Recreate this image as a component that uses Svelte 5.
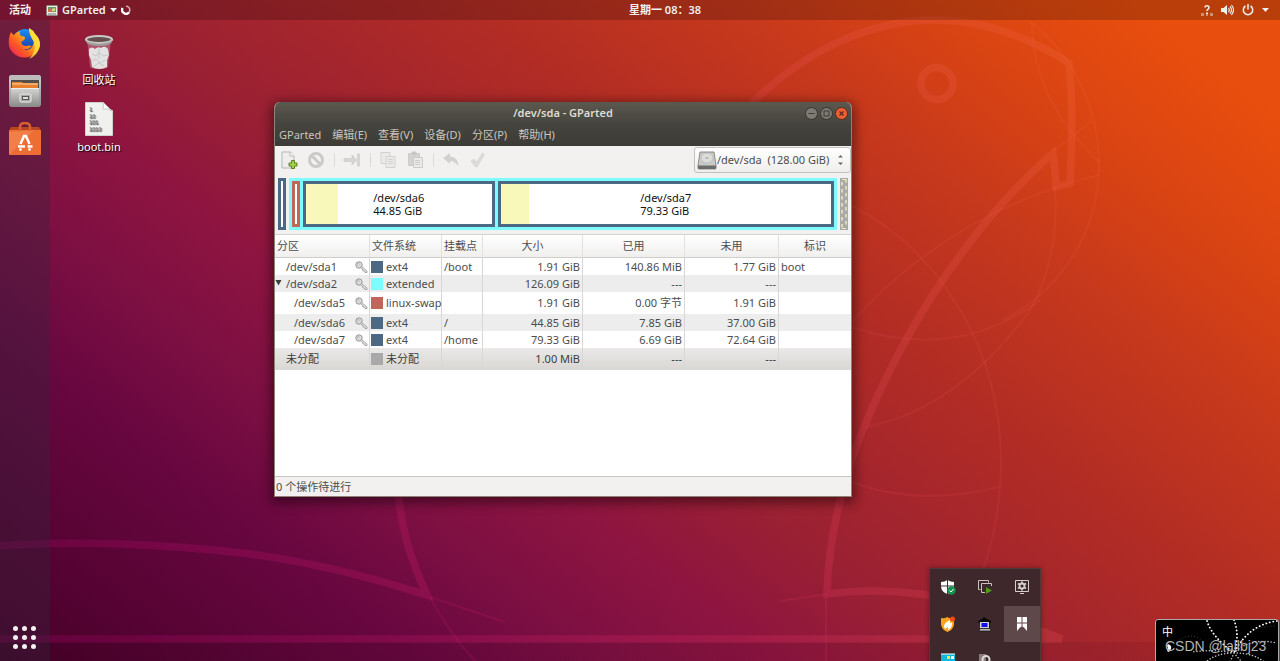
<script>
  const rows = [
    { name: '/dev/sda1', depth: 1, key: true, color: '#4b6983', fs: 'ext4', mount: '/boot', size: '1.91 GiB', used: '140.86 MiB', free: '1.77 GiB', flag: 'boot' },
    { name: '/dev/sda2', depth: 1, key: true, open: true, color: '#7dfcfe', fs: 'extended', mount: '', size: '126.09 GiB', used: '---', free: '---', flag: '' },
    { name: '/dev/sda5', depth: 2, key: true, tall: true, color: '#c1665a', fs: 'linux-swap', mount: '', size: '1.91 GiB', used: '0.00 字节', free: '1.91 GiB', flag: '' },
    { name: '/dev/sda6', depth: 2, key: true, color: '#4b6983', fs: 'ext4', mount: '/', size: '44.85 GiB', used: '7.85 GiB', free: '37.00 GiB', flag: '' },
    { name: '/dev/sda7', depth: 2, key: true, color: '#4b6983', fs: 'ext4', mount: '/home', size: '79.33 GiB', used: '6.69 GiB', free: '72.64 GiB', flag: '' },
    { name: '未分配', depth: 1, tall: true, selected: true, color: '#a9a9a9', fs: '未分配', mount: '', size: '1.00 MiB', used: '---', free: '---', flag: '' }
  ];
  const menus = ['GParted', '编辑(E)', '查看(V)', '设备(D)', '分区(P)', '帮助(H)'];
  const heads = ['分区', '文件系统', '挂载点', '大小', '已用', '未用', '标识'];
  const dots = [0, 1, 2, 3, 4, 5, 6, 7, 8];
</script>

<div class="screen">
  <svg class="wallpaper" viewBox="0 0 1280 661" preserveAspectRatio="xMidYMid slice" aria-hidden="true">
    <defs>
      <linearGradient id="line" gradientUnits="userSpaceOnUse" x1="0" y1="661" x2="1280" y2="0">
        <stop offset="0" stop-color="#c0007c" stop-opacity=".2" />
        <stop offset=".45" stop-color="#d42a5c" stop-opacity=".3" />
        <stop offset="1" stop-color="#ff8040" stop-opacity=".2" />
      </linearGradient>
      <linearGradient id="floor" x1="0" y1="0" x2="1" y2="0">
        <stop offset="0" stop-color="#000" stop-opacity=".08" />
        <stop offset="1" stop-color="#4a0020" stop-opacity=".1" />
      </linearGradient>
    </defs>
    <rect x="0" y="642" width="1280" height="19" fill="url(#floor)" />
    <g fill="none" stroke="url(#line)" stroke-width="7.500">
      <path d="M0 546C70 540 170 544 250 554C310 562 370 577 427 595C411 560 401 530 398 490C395 330 560 300 750 105C805 50 870 20 935 20C985 20 1030 38 1069 63C1073 100 1072 145 1070 183L1056 187C1055 175 1055 165 1053 153C960 235 895 345 855 450C838 500 828 545 827 594C880 587 930 593 975 605L1062 639H0" />
      <circle cx="937" cy="83.500" r="16" />
    </g>
    <g fill="none" stroke="url(#line)" stroke-width="2" opacity=".65">
      <path d="M1027 20C1070 50 1099 105 1099 165C1099 230 1062 290 1003 320" />
      <path d="M1032 22C1032 75 1055 120 1099 162M1092 121L1053 151M1099 175C1010 196 920 245 852 322" />
      <path d="M1055 187C1059 240 1045 290 1025 317C985 370 930 415 866 427" />
      <path d="M850 205C940 250 1001 350 1001 462C1001 500 995 535 983 570" />
      <path d="M852 327C920 350 985 342 1040 300M852 482C900 500 950 499 999 487" />
      <path d="M826 597V661M780 601L828 594M430 597L505 622M430 597Q448 632 475 661" />
    </g>
  </svg>

  <header class="topbar">
    <div class="left">
      <button>活动</button>
      <button class="app">
        <svg width="12" height="11" viewBox="0 0 12 11"><rect x=".5" y=".5" width="11" height="10" rx="1" fill="#ece9e2" stroke="#8a8580" /><rect x="2" y="2" width="8" height="5" fill="#5f9c6b" /><path d="M2 5l2-2 2 2v2H2z" fill="#d46d55" /><path d="M6 4l3-1v3H6z" fill="#e7d777" /><path d="M2 9h8" stroke="#777" /></svg>
        <span>GParted</span>
        <svg width="7" height="5" viewBox="0 0 7 5"><path d="M0 0h7L3.500 4z" fill="#eee" /></svg>
        <svg width="10" height="10" viewBox="0 0 10 10"><path d="M5 1.200A3.800 3.800 0 0 1 5 8.800" fill="none" stroke="#eee" stroke-width="1.600" opacity=".7" /><path d="M1.500 3A4 4 0 0 0 8 7.500" fill="none" stroke="#fff" stroke-width="2.400" /></svg>
      </button>
    </div>
    <button class="clock">星期一 08：38</button>
    <div class="right">
      <svg width="12" height="12" viewBox="0 0 12 12"><path d="M0 9h3v3H0zM9 9h3v3H9zM5 10h2v2H5z" fill="#eee" opacity=".45" /><path d="M4 3.500C4 1 8 1 8 3.500C8 5.200 6 5 6 7" fill="none" stroke="#eee" stroke-width="1.500" /><path d="M5 8.500h2v1.500H5z" fill="#eee" /></svg>
      <svg width="13" height="12" viewBox="0 0 13 12"><path d="M0 4h2.500L6 1v10L2.500 8H0z" fill="#eee" /><path d="M7.500 4q1.500 2 0 4M9 2.500q3 3.500 0 7M10.500 1q4 5 0 10" fill="none" stroke="#eee" stroke-width="1.200" /></svg>
      <svg width="12" height="12" viewBox="0 0 12 12"><path d="M3.500 2A4.700 4.700 0 1 0 8.500 2M6 0v5.500" fill="none" stroke="#eee" stroke-width="1.500" /></svg>
      <svg width="7" height="5" viewBox="0 0 7 5"><path d="M0 0h7L3.500 4z" fill="#eee" /></svg>
    </div>
  </header>

  <main class="workspace">
    <nav class="dock">
      <button aria-label="Firefox">
        <svg width="34" height="34" viewBox="0 0 34 34">
          <defs>
            <linearGradient id="fox" x1="1" y1="0" x2="0" y2="1"><stop offset="0" stop-color="#fff36a" /><stop offset=".35" stop-color="#ffb51b" /><stop offset=".65" stop-color="#ff5a23" /><stop offset="1" stop-color="#e8136a" /></linearGradient>
            <linearGradient id="globe" x1="0" y1="0" x2="0" y2="1"><stop offset="0" stop-color="#1b8ff2" /><stop offset="1" stop-color="#1b2e9c" /></linearGradient>
          </defs>
          <circle cx="17" cy="15" r="12" fill="url(#globe)" />
          <path d="M3 6q1 2 3 3q2-3 6-4q-1 3 1 5q4 0 4 2t-4 4q1 4 5 4q3-1 6 0q-5 5-10 3q6 3 10-2t-1-11q-2-4-2-8q4 2 6 6q5 4 5 11a16 16 0 0 1-31 1Q0 12 3 6z" fill="url(#fox)" />
          <path d="M21 2q4 2 6 6q5 5 5 12q-2 9-11 13q8-7 5-17q-5-7-5-14z" fill="#ffe23a" opacity=".85" />
        </svg>
      </button>
      <button aria-label="文件">
        <svg width="34" height="34" viewBox="0 0 34 34">
          <defs><linearGradient id="cab" x1="0" y1="0" x2="0" y2="1"><stop offset="0" stop-color="#d5d5d3" /><stop offset="1" stop-color="#8c8c8a" /></linearGradient></defs>
          <rect x="1" y="1" width="32" height="32" rx="3" fill="url(#cab)" /><path d="M1 4q0-3 3-3h26q3 0 3 3v2H1z" fill="#bcbcba" />
          <rect x="3" y="6" width="28" height="9" fill="#56504d" /><path d="M4 8h10l1 1h15v6H4z" fill="#e9802d" /><path d="M4 10h26" stroke="#ffd3a0" />
          <path d="M3 14h28v18H3z" fill="url(#cab)" /><path d="M3 14.500h28" stroke="#efefed" />
          <rect x="12" y="20" width="11" height="8" rx="1" fill="#aaa" stroke="#eee" /><rect x="14.500" y="22.500" width="6" height="3" fill="#ddd" stroke="#555" />
        </svg>
      </button>
      <button aria-label="Ubuntu 软件">
        <svg width="34" height="34" viewBox="0 0 34 34">
          <path d="M3 5h28l2 4H1z" fill="#b9481f" /><path d="M1 8h32v24q0 1-1 1H2q-1 0-1-1z" fill="#ee6d35" /><path d="M1 33V10l25-2z" fill="#f4a06e" opacity=".35" />
          <path d="M12 9V5q0-4 5-4t5 4v4" fill="none" stroke="#d8622f" stroke-width="2.500" />
          <path d="M12.500 22l3.500-8h2l3.500 8M10 24.500h7M19.500 24.500h5M12 28.500l1-2M22 28.500l-1-2" fill="none" stroke="#fff" stroke-width="2.400" />
        </svg>
      </button>
      <button class="apps" aria-label="显示应用程序">{#each dots as d (d)}<i></i>{/each}</button>
    </nav>

    <section class="desktop">
      <button>
        <svg width="30" height="36" viewBox="0 0 30 36">
          <path d="M3 5l3 28q1 2 9 2t9-2l3-28z" fill="#fff" fill-opacity=".25" />
          <path d="M5 15q3-3 6 0q3-3 6-1q4-3 7 1l1 6-2 5v7q-8 4-15 0l-1-7-2-5z" fill="#e2e2e2" />
          <path d="M8 20l4 2 3-4 4 4 5-1M8 27l4-2 4 4 5-3M10 32l5-3 5 3M15 15v10" fill="none" stroke="#c6c6c6" />
          <ellipse cx="15" cy="5.500" rx="13" ry="3.500" fill="#65504f" stroke="#c8c8c5" stroke-width="2.200" /><path d="M2 6q1 3 13 4q12-1 13-4v2q-2 4-13 4T2 8z" fill="#9c9c9a" />
        </svg>
        <span>回收站</span>
      </button>
      <button>
        <svg width="30" height="36" viewBox="0 0 30 36">
          <path d="M1.500 1.500h18q2 6 9 8v25h-27z" fill="#f0f0ef" stroke="#d0d0ce" /><path d="M19 1q1 3 0 7q5-1 9 2z" fill="#fff" stroke="#bbb" stroke-width=".8" />
          <g font-family="Liberation Sans, sans-serif" font-size="5.500" fill="#777"><text x="5" y="9.500">1</text><text x="5" y="16.500">10</text><text x="5" y="23">101</text><text x="5" y="30">1010</text></g>
        </svg>
        <span>boot.bin</span>
      </button>
    </section>

    <section class="window" aria-label="GParted">
      <div class="titlebar">
        <h1>/dev/sda - GParted</h1>
        <div class="controls">
          <button aria-label="最小化"><svg width="13" height="13" viewBox="0 0 13 13"><circle cx="6.500" cy="6.500" r="6" fill="#7d7b74" stroke="#35342f" /><path d="M3.500 6.500h6" stroke="#3c3b37" /></svg></button>
          <button aria-label="最大化"><svg width="13" height="13" viewBox="0 0 13 13"><circle cx="6.500" cy="6.500" r="6" fill="#7d7b74" stroke="#35342f" /><rect x="4" y="4" width="5" height="5" fill="none" stroke="#3c3b37" /></svg></button>
          <button aria-label="关闭"><svg width="13" height="13" viewBox="0 0 13 13"><circle cx="6.500" cy="6.500" r="6" fill="#ee5f33" stroke="#5b2c1c" /><path d="M4.500 4.500l4 4m0-4l-4 4" stroke="#5a2a1a" stroke-width="1.200" /></svg></button>
        </div>
      </div>
      <nav class="menubar">{#each menus as m (m)}<button>{m}</button>{/each}</nav>

      <div class="toolbar">
        <button aria-label="新建"><svg width="18" height="18" viewBox="0 0 18 18"><path d="M2 1h8.500l3.500 4v12H2z" fill="#eee" stroke="#b5b5b5" /><path d="M10 1v4h4" fill="#fff" stroke="#bbb" /><path d="M11.500 9.500h3v2.500h2.500v3h-2.500v2.500h-3V15H9v-3h2.500z" fill="#a6cf45" stroke="#4d7a10" stroke-width=".9" /></svg></button>
        <button aria-label="删除"><svg width="18" height="18" viewBox="0 0 18 18"><circle cx="9" cy="9" r="6.500" fill="none" stroke="#cbcac8" stroke-width="3" /><path d="M4.500 4.500l9 9" stroke="#cbcac8" stroke-width="3" /></svg></button>
        <hr />
        <button aria-label="调整大小/移动"><svg width="18" height="18" viewBox="0 0 18 18"><path d="M1 7.500h8V4l5 5-5 5v-3.500H1z" fill="#d6d5d3" stroke="#cac9c7" stroke-width=".6" /><path d="M14.500 3h2v12h-2z" fill="#d6d5d3" stroke="#cac9c7" stroke-width=".6" /></svg></button>
        <hr />
        <button aria-label="复制"><svg width="18" height="18" viewBox="0 0 18 18" fill="#ebeae8" stroke="#d3d2d0"><path d="M2 1.500h9v11H2z" /><path d="M7 5.500h9v11H7zM9 8.500h5M9 10.500h5M9 12.500h5" /></svg></button>
        <button aria-label="粘贴"><svg width="18" height="18" viewBox="0 0 18 18" stroke="#cccbc9"><path d="M2.500 2.500h11v12h-11z" fill="#d3d2d0" /><path d="M6 1h4v3H6z" fill="#c4c3c1" /><path d="M7.500 6.500h9v10h-9zM9 9.500h5M9 11.500h5M9 13.500h5" fill="#ebeae8" /></svg></button>
        <hr />
        <button aria-label="撤消"><svg width="18" height="18" viewBox="0 0 18 18"><path d="M1 7l7-5v3.500q8 0 8.500 10Q13 10 8 10v3z" fill="#d2d1cf" /></svg></button>
        <button aria-label="应用"><svg width="18" height="18" viewBox="0 0 18 18"><path d="M2 10l3-2 2.500 3.500L13.500 2l2 1.500L8 16H6.500z" fill="#dcdbd9" stroke="#d0cfcd" stroke-width=".6" /></svg></button>
        <div class="device">
          <svg width="20" height="20" viewBox="0 0 20 20" aria-hidden="true"><path d="M3 2h14l2 13v3q0 1-1 1H2q-1 0-1-1v-3z" fill="#c9c9c7" stroke="#777" stroke-width=".8" /><ellipse cx="10" cy="8" rx="6" ry="5" fill="#dcdcda" stroke="#b2b2b0" stroke-width=".6" /><ellipse cx="10" cy="8" rx="1.500" ry="1" fill="#b0b0ae" /><path d="M1 15.500h18v2.500q0 1-1 1H2q-1 0-1-1z" fill="#6c6c6a" /></svg>
          <select aria-label="设备"><option>/dev/sda &nbsp;(128.00 GiB)</option></select>
          <svg class="updown" width="5" height="10" viewBox="0 0 5 10" aria-hidden="true"><path d="M0 2.500h5L2.500 0zM0 7.500h5L2.500 10z" fill="#666" /></svg>
        </div>
      </div>

      <div class="map">
        <div class="part tiny"></div>
        <div class="extended">
          <div class="part tiny swap"></div>
          <div class="part" style="flex-grow:191"><b style="width:17%"></b><p>/dev/sda6<br />44.85 GiB</p></div>
          <div class="part" style="flex-grow:340"><b style="width:8.500%"></b><p>/dev/sda7<br />79.33 GiB</p></div>
        </div>
        <svg class="free" width="8" height="52" viewBox="0 0 8 52" aria-hidden="true">
          <path d="M0 0h8v52H0z" fill="#a9a9a9" />
          <path d="M2 4v48M6 1v48" stroke="#ecebb8" stroke-width="1.500" stroke-dasharray="3.500 3.500" />
          <path d="M2 1.500h4M2 50.500h4" stroke="#ecebb8" />
        </svg>
      </div>

      <div class="list">
        <table>
          <colgroup><col class="c1" /><col class="c2" /><col class="c3" /><col class="c4" /><col class="c5" /><col class="c6" /><col class="c7" /></colgroup>
          <thead><tr>{#each heads as h, i (h)}<th class:mid={i > 2}>{h}</th>{/each}</tr></thead>
          <tbody>
            {#each rows as r (r.name)}
              <tr class:tall={r.tall} class:selected={r.selected}>
                <td>
                  <div class="name" class:deep={r.depth === 2}>
                    {#if r.open}<svg class="tri" width="7" height="6" viewBox="0 0 7 6"><path d="M.5 0h6L3.500 5.500z" fill="#3c3b37" /></svg>{/if}
                    <span>{r.name}</span>
                    {#if r.key}<svg class="key" width="13" height="12" viewBox="0 0 13 12"><circle cx="4" cy="4" r="3.200" fill="#ddd" stroke="#999" /><circle cx="3.200" cy="3.200" r="1" fill="#fff" stroke="#999" stroke-width=".6" /><path d="M6.300 5.200l5.700 4.800v1.500h-2l-1-1.500-1.300-.3-.2-1.500-2-1.500z" fill="#ddd" stroke="#999" stroke-width=".8" /></svg>{/if}
                  </div>
                </td>
                <td class="type"><div class="fs"><i style="background:{r.color}"></i>{r.fs}</div></td>
                <td>{r.mount}</td>
                <td class="num">{r.size}</td>
                <td class="num">{r.used}</td>
                <td class="num">{r.free}</td>
                <td>{r.flag}</td>
              </tr>
            {/each}
          </tbody>
        </table>
      </div>
      <footer>0 个操作待进行</footer>
    </section>
  </main>

  <aside class="tray">
    <button aria-label="安全中心"><svg width="16" height="16" viewBox="0 0 16 16"><path d="M7.500 1q3 2 6.500 2v4q0 6-6.500 8Q1 13 1 7V3q3.500 0 6.500-2z" fill="#fff" /><path d="M7.500 1v14M1 7h13" stroke="#403034" /><circle cx="11.500" cy="11.500" r="4.200" fill="#16924f" /><path d="M9.500 11.500l1.500 1.500 2.500-3" fill="none" stroke="#fff" /></svg></button>
    <button aria-label="虚拟机"><svg width="16" height="16" viewBox="0 0 16 16" fill="none" stroke="#c9c2c3"><path d="M3.500 10.500h-2v-9h10v2" /><path d="M8 13.500H4.500v-9h10V7" /><path d="M9 8l6 3.500-6 3.500z" fill="#4f9b1a" stroke="none" /></svg></button>
    <button aria-label="显卡设置"><svg width="16" height="16" viewBox="0 0 16 16" fill="none" stroke="#d5cfd0"><path d="M1.500 1.500h13v11h-13zM6 14.500h4" /><circle cx="8" cy="7" r="2.500" stroke-width="1.800" /><path d="M8 2.500v2M8 9.500v2M4 4.500l2 1.200M10 8.300l2 1.200M4 9.500l2-1.200M10 5.700l2-1.200" stroke-width="1.800" /></svg></button>
    <button aria-label="防护"><svg width="16" height="16" viewBox="0 0 16 16"><path d="M1 2q4 1 6-1 3 2 7 1v6q0 5-6.500 8Q1 13 1 8z" fill="#f9a51c" /><path d="M4 10q0-3 6-6v3q2 0 2-1 1 5-4 8v-3q-2 1-3 2-1-1-1-3z" fill="#fff" /><circle cx="12.500" cy="3" r="2.500" fill="#f04a1c" /></svg></button>
    <button aria-label="远程"><svg width="16" height="16" viewBox="0 0 16 16"><path d="M1 5l4-2 2-2 3 2 4 2v2H2z" fill="#080808" /><path d="M3 6h9v6H3z" fill="#d0d0d0" /><path d="M4.500 7h6v4h-6z" fill="#1010ee" /><path d="M3 12.500h10l1 2.500H2z" fill="#bbb" stroke="#111" stroke-width=".7" /><path d="M12.500 6v6" stroke="#111" fill="none" /></svg></button>
    <button class="on" aria-label="书签"><svg width="16" height="16" viewBox="0 0 16 16"><path d="M3 1h10v14l-2.500-3-2.500-2-2.500 2L3 15z" fill="#fff" /><path d="M8 1v9M3 7h10" stroke="#5f484a" /></svg></button>
    <button aria-label="面板"><svg width="16" height="16" viewBox="0 0 16 16"><path d="M1 1h14v15H1z" fill="#0fb9dc" /><path d="M1 1h14" stroke="#fff" /><path d="M7 3h3v3H7z" fill="#ffe13b" /><path d="M11 3h3v3h-3z" fill="#fff" /></svg></button>
    <button aria-label="设备状态"><svg width="16" height="16" viewBox="0 0 16 16"><path d="M2 1h7v8H2z" fill="#8b7b7d" /><circle cx="9" cy="6.500" r="3.500" fill="none" stroke="#ddd" stroke-width="2" /></svg></button>
  </aside>

  <aside class="ime">
    <svg viewBox="0 0 122 42" width="122" height="42" aria-hidden="true" fill="none" stroke="#fff" stroke-linecap="round">
      <path d="M51 1q5 16 27 32M78 0q6 15 0 33M121 1Q92 5 78 33" stroke-width="1.800" stroke-dasharray=".1 3.500" />
      <path d="M78 33q16-16 43-10M78 33q-20-4-42-1M78 33q-18 0-28 9M78 33q20 0 30 9M78 33l-4 9M78 33l8 9" stroke-width="1.500" stroke-dasharray=".1 3" opacity=".75" />
      <path d="M92 14q10-8 28-8M24 20q10-8 22 0" stroke-width=".8" stroke-dasharray=".1 3" opacity=".35" />
      <path d="M12 24q6 2 1 8l-2-1q2-3 0-5z" fill="#fff" stroke="none" />
    </svg>
    <span>中</span>
    <p>CSDN @lallbj23</p>
  </aside>
</div>

<style>
  :global(body) { margin: 0; }
  .screen {
    position: relative; display: flex; flex-direction: column; min-height: 100vh; overflow: hidden;
    background: linear-gradient(38deg, #470028 0%, #680740 20%, #7c0f42 28%, #8f1540 37%, #9a2033 45%, #b12c25 61%, #c7391c 74%, #d84314 82%, #e84e0d 93%);
    font-family: "Noto Sans", "Noto Sans CJK SC", sans-serif; font-size: 11px; line-height: 16px; color: #4c4c4c;
  }
  .wallpaper { position: absolute; inset: 0; width: 100%; height: 100%; }
  button { margin: 0; padding: 0; border: 0; background: none; font: inherit; color: inherit; }
  svg { display: block; flex: none; }
  .topbar { position: relative; display: grid; grid-template-columns: 1fr auto 1fr; align-items: center; height: 20px; background: rgba(0, 0, 0, .2); color: #f0f0f0; font-weight: 600; }
  .left { display: flex; gap: 15px; padding-left: 9px; }
  .app { display: flex; align-items: center; gap: 4px; }
  .clock { margin-left: 50px; }
  .right { display: flex; align-items: center; justify-content: flex-end; gap: 8px; padding-right: 11px; }
  .workspace { position: relative; display: flex; flex: 1; }
  .dock { display: flex; flex-direction: column; align-items: center; gap: 14px; width: 50px; box-sizing: border-box; padding: 6px 1px 0 0; background: rgba(50, 40, 60, .35); }
  .apps { display: grid; grid-template-columns: repeat(3, 5px); gap: 4px; margin-top: auto; margin-bottom: 12px; }
  .apps i { height: 5px; border-radius: 50%; background: #f2f2f0; }
  .desktop { display: flex; flex-direction: column; align-items: center; gap: 13px; width: 98px; padding-top: 14px; }
  .desktop button { display: flex; flex-direction: column; align-items: center; gap: 2px; color: #fff; text-shadow: 1px 1px 1px #000; }

  .window { position: absolute; left: 274px; top: 82px; display: flex; flex-direction: column; width: 578px; height: 395px; box-sizing: border-box; border: 1px solid #8f8378; border-top: 0; border-radius: 6px 6px 0 0; background: #f2f1f0; box-shadow: 0 3px 12px 3px rgba(0, 0, 0, .45); overflow: hidden; }
  .titlebar { display: grid; grid-template-columns: 1fr auto 1fr; align-items: center; height: 22px; background: linear-gradient(#5b594f, #45443e); color: #dfdbd2; }
  h1 { grid-column: 2; margin: 0; font-size: 11px; font-weight: 600; line-height: 16px; }
  .controls { display: flex; justify-content: flex-end; gap: 2px; padding-right: 3px; }
  .menubar { display: flex; align-items: center; gap: 11px; height: 22px; padding-left: 4px; background: linear-gradient(#45443e, #3c3b37); color: #c9c6bd; }
  .toolbar { display: flex; align-items: center; gap: 9px; height: 28px; padding-left: 5px; }
  .toolbar hr { width: 1px; height: 14px; margin: 0 -1px 0 0; border: 0; background: #dddbd9; }
  .device { display: flex; align-items: center; width: 157px; height: 26px; box-sizing: border-box; margin-left: auto; padding: 0 7px 0 2px; border: 1px solid #c4c1bd; border-radius: 3px; background: linear-gradient(#fff, #efeeec); }
  select { appearance: none; flex: 1; min-width: 0; padding: 0; border: 0; background: none; font: inherit; color: #4c4c4c; }

  .map { display: flex; gap: 3px; height: 52px; margin: 4px 3px; }
  .part { position: relative; display: flex; align-items: center; justify-content: center; flex: 1 1 0; border: 3px solid #4b6983; background: #fff; color: #111; line-height: 13px; }
  .part b { position: absolute; left: 0; top: 0; bottom: 0; background: #f8f8ba; }
  .part p { margin: 0; }
  .tiny { flex: none; width: 2px; }
  .swap { border-color: #c1665a; }
  .extended { display: flex; flex: 1; gap: 3px; padding: 3px; background: #7dfcfe; }

  .list { flex: 1; border-top: 1px solid #d5d3d0; border-bottom: 1px solid #c9c7c4; background: #fff; }
  table { width: 100%; table-layout: fixed; border-collapse: separate; border-spacing: 0; }
  .c1 { width: 95px; } .c2 { width: 72px; } .c3 { width: 41px; } .c4 { width: 100px; } .c5 { width: 102px; } .c6 { width: 94px; }
  th { height: 22px; padding: 0 2px; border-right: 1px solid #e3e1df; border-bottom: 1px solid #d0cecb; background: linear-gradient(#fff, #f0efee); font-weight: 400; text-align: left; white-space: nowrap; }
  th.mid { text-align: center; }
  td { height: 17px; padding: 0 2px; border-right: 1px solid #d9d7d5; line-height: 16px; white-space: nowrap; }
  td.type { padding: 0 0 0 1px; }
  th:last-child, td:last-child { border-right: 0; }
  tbody tr:nth-child(even) { background: #ededed; }
  .tall td { height: 22px; }
  tbody .selected { background: linear-gradient(#eae9e7, #d9d7d4) !important; color: #3c3c3c; }
  .num { text-align: right; }
  .name { position: relative; display: flex; align-items: center; justify-content: space-between; margin-right: -1px; padding-left: 9px; }
  .deep { padding-left: 17px; }
  .tri { position: absolute; left: -2px; top: 4px; }
  .fs { display: flex; align-items: center; gap: 3px; }
  .fs i { flex: none; width: 12px; height: 12px; }
  footer { padding: 2px 1px 1px; line-height: 16px; }

  .tray { position: absolute; left: 929px; top: 568px; display: grid; grid-template-columns: repeat(3, 36px); grid-auto-rows: 36px; gap: 1px; border: 1px solid #51393a; background: #3f282b; box-shadow: 0 0 5px rgba(0, 0, 0, .35); }
  .tray button { display: flex; align-items: center; justify-content: center; }
  .tray .on { background: #5f484a; }
  .ime { position: absolute; right: 1px; bottom: -2px; width: 122px; height: 42px; box-sizing: content-box; border: 1px solid #aaa; border-radius: 3px; background: #000; color: #fff; overflow: hidden; }
  .ime svg { position: absolute; inset: 0; }
  .ime span { position: absolute; left: 6px; top: 4px; }
  .ime p { position: absolute; left: 9px; top: 18px; margin: 0; font-family: "Liberation Sans", sans-serif; font-size: 14px; color: #b4b4b4; white-space: nowrap; }
</style>
